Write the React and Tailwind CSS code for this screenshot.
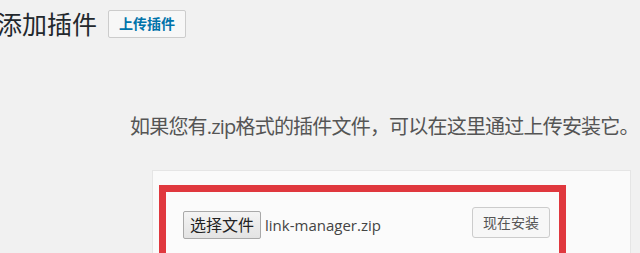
export default function App() {
  const font = { fontFamily: '"Open Sans", "Noto Sans CJK SC", sans-serif' };
  return (
    <div className="w-[640px] h-[253px] overflow-hidden bg-[#f1f1f1]" style={font}>
      <div className="flex items-center gap-[11px] pt-[10px] ml-[-3px]">
        <h1 className="text-[25px] leading-[28px] text-[#23282d] font-normal">添加插件</h1>
        <button className="h-[28px] px-[10px] border border-[#cccccc] rounded-[2px] bg-[#f7f7f7] text-[14px] leading-[26px] font-bold text-[#0073aa]">
          上传插件
        </button>
      </div>
      <p className="mt-[75px] ml-[130px] text-[20px] leading-[28px] tracking-[-0.8px] text-[#555555] whitespace-nowrap">
        如果您有.zip格式的插件文件，可以在这里通过上传安装它。
      </p>
      <div className="mt-[29px] ml-[152px] w-[479px] h-[200px] bg-[#fafafa] border border-[#e5e5e5] pt-[14px] pl-[6px]">
        <div className="w-[407px] h-[200px] border-[7px] border-[#e0383e] bg-[#fbfbfb] flex items-start justify-between pl-[17px] pr-[9px] pt-[15px]">
          <div className="flex items-center gap-[4px] mt-[4px]">
            <button className="h-[28px] px-[6px] border border-[#a9a9a9] rounded-[2px] bg-gradient-to-b from-[#f4f4f4] to-[#e3e3e3] text-[16px] leading-[26px] text-[#222222]">
              选择文件
            </button>
            <span className="text-[15px] leading-[28px] text-[#444444]">link-manager.zip</span>
          </div>
          <button className="h-[31px] px-[10px] border border-[#cccccc] rounded-[3px] bg-[#f7f7f7] text-[14px] leading-[29px] text-[#555555]">
            现在安装
          </button>
        </div>
      </div>
    </div>
  );
}
